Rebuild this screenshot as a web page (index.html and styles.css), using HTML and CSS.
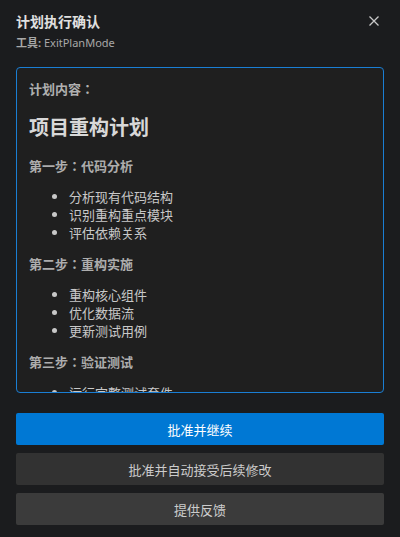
FILE: index.html
```html
<!DOCTYPE html>
<html lang="en">
<head>
<meta charset="utf-8">
<link rel="stylesheet" href="styles.css">
</head>
<body>
<div class="dialog">
  <div class="header">
    <div class="titles">
      <div class="title">计划执行确认</div>
      <div class="tool"><b>工具:</b> ExitPlanMode</div>
    </div>
    <button class="close" aria-label="关闭">
      <svg width="12" height="12" viewBox="0 0 12 12"><path d="M1.5 1.5 L10.5 10.5 M10.5 1.5 L1.5 10.5" stroke="#c8c8c8" stroke-width="1.3" fill="none"/></svg>
    </button>
  </div>
  <div class="plan">
    <div class="label">计划内容：</div>
    <h1>项目重构计划</h1>
    <h3>第一步：代码分析</h3>
    <ul>
      <li>分析现有代码结构</li>
      <li>识别重构重点模块</li>
      <li>评估依赖关系</li>
    </ul>
    <h3>第二步：重构实施</h3>
    <ul>
      <li>重构核心组件</li>
      <li>优化数据流</li>
      <li>更新测试用例</li>
    </ul>
    <h3>第三步：验证测试</h3>
    <ul>
      <li>运行完整测试套件</li>
      <li>性能基准测试</li>
      <li>代码审查</li>
    </ul>
  </div>
  <div class="actions">
    <button class="btn primary">批准并继续</button>
    <button class="btn secondary">批准并自动接受后续修改</button>
    <button class="btn tertiary">提供反馈</button>
  </div>
</div>
</body>
</html>
```
FILE: styles.css
```css
html, body {
  margin: 0;
  padding: 0;
  background: #1b1c1e;
}
body {
  font-family: "Noto Sans", "Noto Sans CJK JP", sans-serif;
  color: #cccccc;
}
.dialog {
  width: 400px;
  height: 537px;
  box-sizing: border-box;
  padding: 12px 16px 0 16px;
  display: flex;
  flex-direction: column;
}
.header {
  display: flex;
  justify-content: space-between;
  align-items: flex-start;
}
.title {
  font-size: 14px;
  font-weight: bold;
  color: #e0e0e0;
  line-height: 20px;
}
.tool {
  margin-top: 3px;
  font-size: 11px;
  line-height: 16px;
  color: #a8a8a8;
}
.tool b {
  font-weight: bold;
}
.close {
  background: none;
  border: none;
  padding: 0;
  margin: 3px 4px 0 0;
  width: 12px;
  height: 12px;
  display: flex;
  cursor: pointer;
}
.plan {
  margin-top: 16px;
  height: 326px;
  box-sizing: border-box;
  border: 1px solid #1a7ed4;
  border-radius: 4px;
  background: #1f1f1f;
  padding: 11px 12px;
  overflow: hidden;
  font-family: "Noto Sans CJK JP", sans-serif;
}
.label {
  font-size: 13px;
  font-weight: bold;
  color: #b0b0b0;
  line-height: 20px;
}
h1 {
  font-size: 20px;
  font-weight: bold;
  color: #d8d8d8;
  margin: 14px 0 0 0;
  line-height: 28px;
}
h3 {
  font-size: 13px;
  font-weight: bold;
  color: #adadad;
  margin: 15px 0 0 0;
  line-height: 20px;
}
ul {
  margin: 12px 0 0 0;
  padding-left: 40px;
  font-size: 13px;
  line-height: 18px;
  color: #c8c8c8;
}
ul + h3 {
  margin-top: 12px;
}
.actions {
  margin-top: 20px;
  display: flex;
  flex-direction: column;
  gap: 8px;
}
.btn {
  height: 32px;
  border: none;
  border-radius: 2px;
  font-family: "Noto Sans CJK JP", sans-serif;
  font-size: 13px;
  color: #cccccc;
  cursor: pointer;
}
.primary {
  background: #0078d4;
  color: #ffffff;
}
.secondary {
  background: #323232;
}
.tertiary {
  background: #3b3b3b;
}
```
